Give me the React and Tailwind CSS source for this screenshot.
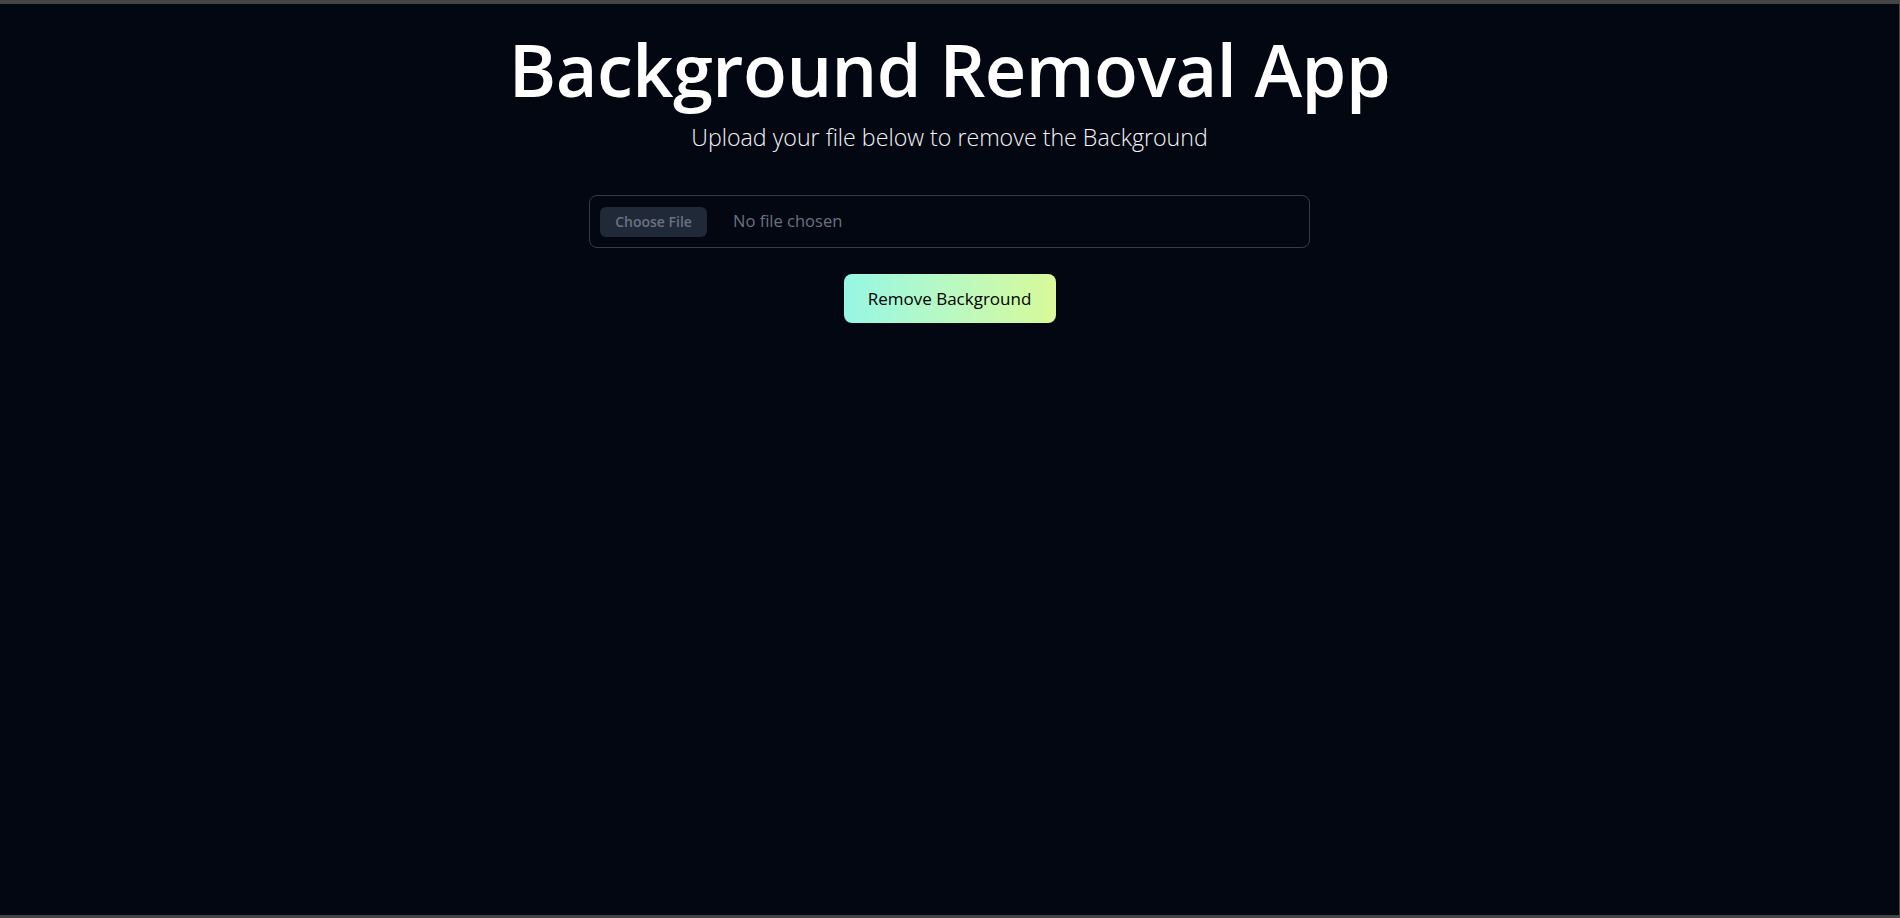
import React, { useState } from "react";

const App = () => {
  const [fileName, setFileName] = useState(null);

  const handleFile = (e) => {
    const file = e.target.files[0];
    setFileName(file ? file.name : null);
  };

  return (
    <div
      className="min-h-[918px] w-full bg-[#030712] border-t-4 border-b-[3px] border-r border-[#464646] flex flex-col items-center pt-[29px]"
      style={{ fontFamily: '"Open Sans", "Noto Sans", sans-serif' }}
    >
      <h1 className="text-[72px] leading-none font-semibold text-white tracking-[-0.5px]">
        Background Removal App
      </h1>
      <p className="mt-4 text-[23.2px] leading-8 font-light text-[#f3f4f6]">
        Upload your file below to remove the Background
      </p>

      <label
        htmlFor="file"
        className="mt-[42px] w-[721px] h-[53px] border border-[#353b48] rounded-lg flex items-center pl-[10px] cursor-pointer"
      >
        <span className="w-[107px] h-[30px] rounded-md bg-[#1f2937] text-[#6b7280] text-sm font-semibold flex items-center justify-center">
          Choose File
        </span>
        <span className="ml-[26px] text-[16.5px] text-[#6b7280]">
          {fileName || "No file chosen"}
        </span>
        <input id="file" type="file" className="hidden" onChange={handleFile} />
      </label>

      <button className="mt-[26px] w-[212px] h-[49px] rounded-lg bg-gradient-to-r from-teal-200 to-lime-200 text-black text-[17px] font-medium">
        Remove Background
      </button>
    </div>
  );
};

export default App;
